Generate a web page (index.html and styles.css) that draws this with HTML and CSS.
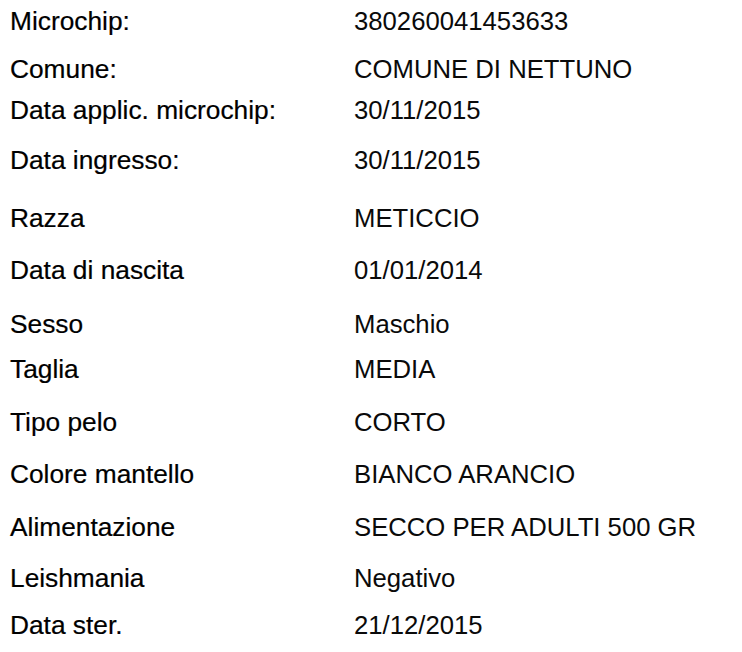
FILE: index.html
```html
<!DOCTYPE html>
<html lang="it">
<head>
<meta charset="utf-8">
<title>Scheda</title>
<link rel="stylesheet" href="styles.css">
</head>
<body>
<dl class="sheet">
  <dt class="label">Microchip:</dt><dd class="value">380260041453633</dd>
  <dt class="label">Comune:</dt><dd class="value">COMUNE DI NETTUNO</dd>
  <dt class="label">Data applic. microchip:</dt><dd class="value">30/11/2015</dd>
  <dt class="label">Data ingresso:</dt><dd class="value">30/11/2015</dd>
  <dt class="label">Razza</dt><dd class="value">METICCIO</dd>
  <dt class="label">Data di nascita</dt><dd class="value">01/01/2014</dd>
  <dt class="label">Sesso</dt><dd class="value">Maschio</dd>
  <dt class="label">Taglia</dt><dd class="value">MEDIA</dd>
  <dt class="label">Tipo pelo</dt><dd class="value">CORTO</dd>
  <dt class="label">Colore mantello</dt><dd class="value">BIANCO ARANCIO</dd>
  <dt class="label">Alimentazione</dt><dd class="value">SECCO PER ADULTI 500 GR</dd>
  <dt class="label">Leishmania</dt><dd class="value">Negativo</dd>
  <dt class="label">Data ster.</dt><dd class="value">21/12/2015</dd>
</dl>
</body>
</html>
```

FILE: styles.css
```css
html, body {
  margin: 0;
  padding: 0;
  background: #ffffff;
}

body {
  font-family: "Liberation Sans", Arial, sans-serif;
  color: #000000;
}

.sheet {
  margin: 0;
  padding: 6px 0 0 10px;
  display: grid;
  grid-template-columns: 344px 1fr;
  grid-template-rows: 48px 41px 50px 58px 52px 54px 45px 53px 52px 53px 51px 47px 40px;
  align-items: start;
}

.label {
  margin: 0;
  font-size: 26.3px;
  line-height: 30px;
  white-space: nowrap;
  -webkit-text-stroke: 0.2px #000000;
}

.value {
  margin: 0;
  font-size: 25.7px;
  line-height: 30px;
  white-space: nowrap;
  color: #0a0a0a;
}
```
